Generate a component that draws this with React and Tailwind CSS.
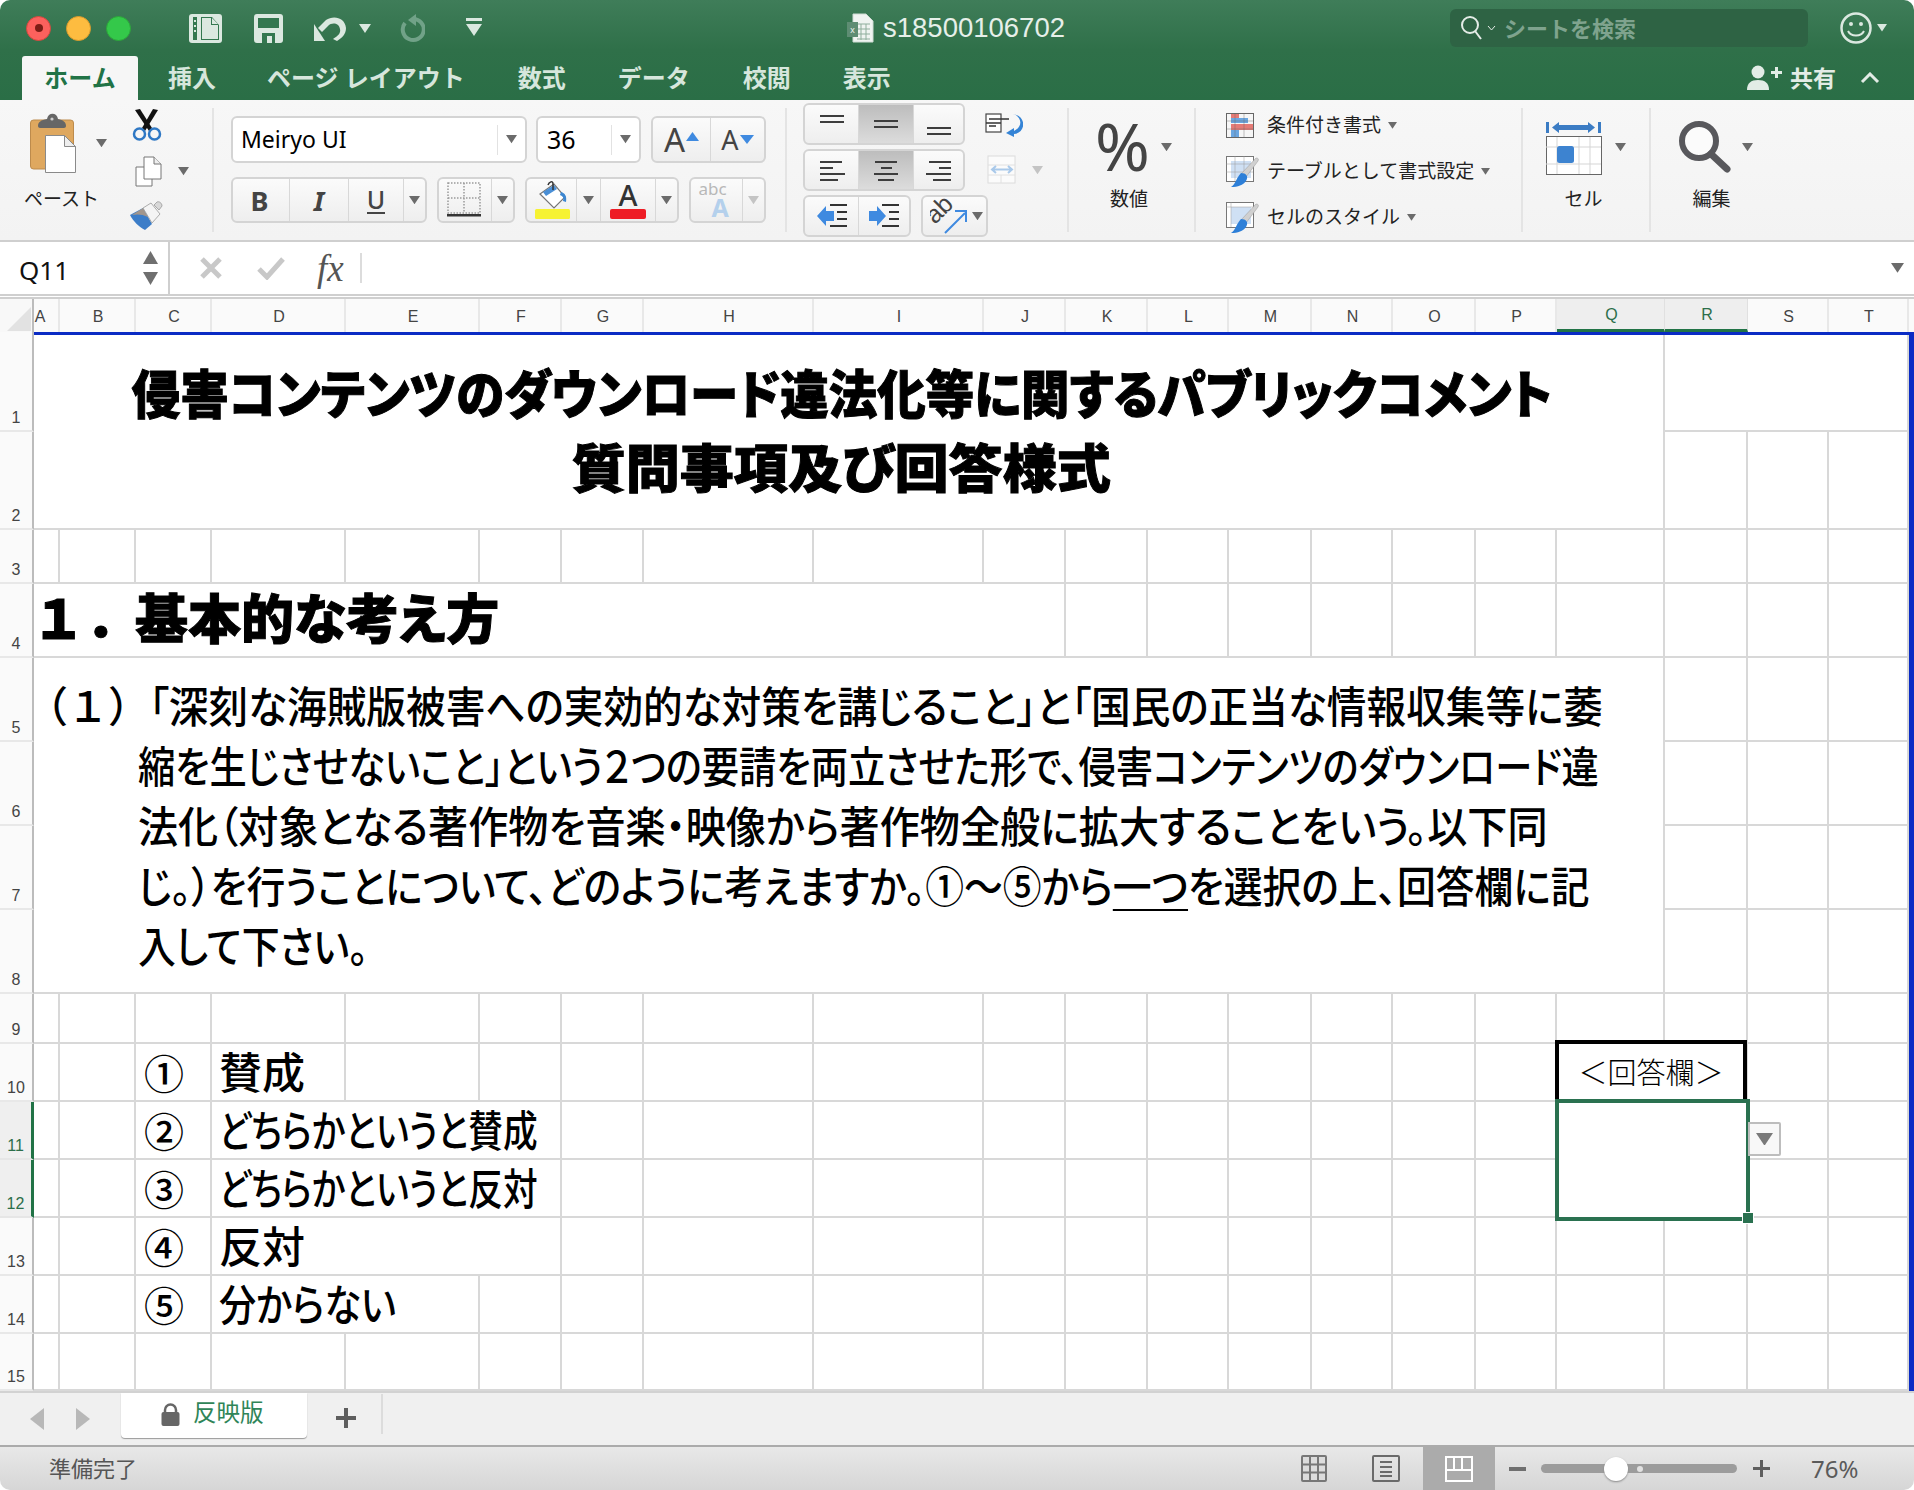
const uiFont = "[font-family:'Noto_Sans','Noto_Sans_CJK_JP',sans-serif]";
const sheetFont = "[font-family:'Noto_Sans_CJK_JP',sans-serif] [font-feature-settings:'palt'] text-black";
const labelFont = "[font-family:'Liberation_Sans',sans-serif]";

const colLetters = ["A", "B", "C", "D", "E", "F", "G", "H", "I", "J", "K", "L", "M", "N", "O", "P", "Q", "R", "S", "T"];

function Drop({ className = "", color = "#6b6b6b", w = 11 }) {
  return (
    <svg width={w} height={w * 0.75} viewBox="0 0 12 9" className={`shrink-0 ${className}`}>
      <path d="M0 0h12L6 9z" fill={color} />
    </svg>
  );
}

function Seg({ className = "", children }) {
  return (
    <div className={`flex overflow-hidden rounded-[6px] border-2 border-[#d4d4d4] bg-gradient-to-b from-[#fbfbfb] to-[#eeeeee] ${className}`}>
      {children}
    </div>
  );
}

function Cell({ w, active, last, children }) {
  return (
    <div
      className={`flex h-full items-center justify-center ${w} ${active ? "bg-gradient-to-b from-[#bdbdbd] to-[#dcdcdc]" : ""} ${last ? "" : "border-r border-[#d8d8d8]"}`}
    >
      {children}
    </div>
  );
}

function Lines({ rows, dy = 0 }) {
  return (
    <svg width="26" height="26" viewBox="0 0 26 26">
      {rows.map(([x, w, y]) => (
        <rect key={y} x={x} y={y + dy} width={w} height="2" fill="#3d3d3d" />
      ))}
    </svg>
  );
}

function Vsep() {
  return <div className="my-[8px] w-[2px] shrink-0 bg-[#e4e4e4]" />;
}

function Paste() {
  return (
    <svg width="47" height="60" viewBox="0 0 47 60">
      <rect x="0.5" y="7" width="43" height="49" rx="3" fill="#dfa85f" stroke="#bd8b4c" />
      <path d="M8 13c0-4 3-6 9-7 1-7 10-7 11 0 5 1 8 3 8 7 0 1-1 2-2 2H10c-1 0-2-1-2-2z" fill="#666" />
      <circle cx="22" cy="6" r="1.6" fill="#cfcfcf" />
      <path d="M15.5 22.500h19l11 11V59.500h-30z" fill="#fff" stroke="#8a8a8a" />
      <path d="M34.500 22.500v11h11z" fill="#eeeeee" stroke="#8a8a8a" />
    </svg>
  );
}

function Scissors() {
  return (
    <svg width="30" height="34" viewBox="0 0 30 34">
      <path d="M3 2l5-1 12 19-3 3z" fill="#111" />
      <path d="M26 2l-5-1-11 19 3 3z" fill="#111" />
      <circle cx="7.500" cy="26" r="5.500" fill="none" stroke="#2f78c4" strokeWidth="2.500" />
      <circle cx="22.500" cy="26" r="5.500" fill="none" stroke="#2f78c4" strokeWidth="2.500" />
    </svg>
  );
}

function Copy() {
  return (
    <svg width="27" height="31" viewBox="0 0 27 31">
      <path d="M1 11h16v19H1z" fill="#fff" stroke="#777" />
      <path d="M9 1h10l7 7v15H9z" fill="#fff" stroke="#777" />
      <path d="M19 1v7h7" fill="#eee" stroke="#777" />
    </svg>
  );
}

function Brush() {
  return (
    <svg width="34" height="30" viewBox="0 0 34 30">
      <path d="M0 14l13-7 9 16-7 6C9 26 3 20 0 14z" fill="#3c7dc8" />
      <path d="M2 14l11-7 5 9c-6-3-11-3-16-2z" fill="#a2968c" />
      <path d="M13 7l8-5 9 11-8 9z" fill="#f4f4f4" stroke="#999" strokeWidth="0.800" />
      <path d="M24 4l3-3c2-1 5 1 5 4l-3 4z" fill="#d8d8d8" stroke="#999" strokeWidth="0.800" />
    </svg>
  );
}

function BorderIcon() {
  return (
    <svg width="36" height="36" viewBox="0 0 36 36">
      <rect x="1" y="1" width="32" height="30" fill="none" stroke="#9a9a9a" strokeWidth="1.500" strokeDasharray="1.500 1.500" />
      <path d="M17 1v30M1 16h32" stroke="#9a9a9a" strokeWidth="1.500" strokeDasharray="1.500 1.500" />
      <rect x="0" y="32" width="34" height="2.500" fill="#333" />
    </svg>
  );
}

function FillIcon() {
  return (
    <svg width="36" height="40" viewBox="0 0 36 40">
      <path d="M6 14L20 4l11 13-11 11z" fill="#fff" stroke="#777" strokeWidth="1.200" />
      <path d="M9 12l11-7 3 4-11 7z" fill="#4a8fd6" />
      <path d="M14 5c1-3 5-5 5-1v6" fill="none" stroke="#333" strokeWidth="1.500" />
      <path d="M27 12c4 1 6 4 5 10l-3-1c1-3 0-5-3-6z" fill="#3c86d0" />
      <rect x="1" y="29" width="35" height="10" rx="1.500" fill="#f6f232" />
    </svg>
  );
}

function WrapIcon() {
  return (
    <svg width="38" height="24" viewBox="0 0 38 24">
      <rect x="1" y="1" width="15" height="18" fill="#fff" stroke="#444" strokeWidth="1.200" />
      <path d="M1 10h15M4 6h20M4 13h7" stroke="#333" strokeWidth="1.500" />
      <path d="M28 1c8 2 11 12 1 17v-3l-8 5 8 4v-3c12-1 13-18-1-20z" fill="#3584d6" />
    </svg>
  );
}

function MergeIcon() {
  return (
    <svg width="30" height="30" viewBox="0 0 30 30">
      <rect x="1" y="1" width="27" height="27" fill="#fbfbfb" stroke="#dcdcdc" />
      <path d="M1 10h27M1 20h27M14 20v8" stroke="#e0e0e0" />
      <path d="M5 14.500h20M9 11l-4 3.500L9 18M21 11l4 3.500-4 3.500" stroke="#a9c9ea" strokeWidth="2" fill="none" />
    </svg>
  );
}

function Indent({ right }) {
  return (
    <svg width="32" height="24" viewBox="0 0 32 24">
      {right ? <path d="M1 7h8V2l9 10-9 10v-5H1z" fill="#3f8ae0" /> : <path d="M18 7h-8V2L1 12l9 10v-5h8z" fill="#3f8ae0" />}
      <path d="M14 1h17M21 8h10M21 15h10M14 22h17" stroke="#333" strokeWidth="2" />
    </svg>
  );
}

function OrientIcon() {
  return (
    <svg width="40" height="38" viewBox="0 0 40 38">
      <text x="0" y="0" transform="translate(5 28) rotate(-45)" fontSize="25" fill="#444" fontFamily="Liberation Sans">ab</text>
      <path d="M15 36L35 16M25 14h11v11" fill="none" stroke="#3f8ae0" strokeWidth="2" />
    </svg>
  );
}

function CondIcon() {
  return (
    <svg width="28" height="25" viewBox="0 0 28 25">
      <rect x="5" y="1" width="8" height="4" fill="#e57b76" />
      <rect x="5" y="5" width="17" height="5" fill="#6ba6e0" />
      <rect x="5" y="11" width="23" height="6" fill="#e57b76" />
      <rect x="5" y="17" width="8" height="7" fill="#6ba6e0" />
      <rect x="0.500" y="0.500" width="27" height="24" fill="none" stroke="#666" />
      <path d="M9 0v25M18 0v25M0 8h27M0 16h27" stroke="#666" strokeWidth="0.400" />
    </svg>
  );
}

function StyleIcon({ grid }) {
  return (
    <svg width="33" height="32" viewBox="0 0 33 32">
      <rect x="0.500" y="0.500" width="27" height="25" fill="#fff" stroke="#777" />
      <rect x="5" y="5" width="20" height="17" fill="#cfe0f4" />
      {grid ? <path d="M9 0v25M18 0v25M0 8h27M0 16h27" stroke="#9a9a9a" strokeWidth="0.500" /> : <path d="M5 0v25M0 5h27" stroke="#999" strokeWidth="0.500" />}
      <path d="M30 2c2 0 3 1 2 3L20 21l-5-3z" fill="#d0d0d0" stroke="#999" strokeWidth="0.500" />
      <path d="M15 17c5 0 8 3 5 8-3 4-8 6-15 6 5-3 5-9 10-14z" fill="#2d7fd8" />
    </svg>
  );
}

function CellsIcon() {
  return (
    <svg width="60" height="56" viewBox="0 0 60 56">
      <path d="M1 3h3v11H1zM53 3h3v11h-3z" fill="#3b7cc4" />
      <path d="M7 8.500l7-5.500v3h29V3l7 5.500-7 5.500v-3H14v3z" fill="#3b7cc4" />
      <rect x="1.500" y="17.500" width="55" height="38" fill="#fff" stroke="#666" />
      <path d="M12 18v37M45 18v37M1 28h55M1 45h55M34 18v37" stroke="#d5d5d5" />
      <rect x="12" y="27" width="17" height="17" rx="2.500" fill="#3d83d0" />
    </svg>
  );
}

function Magnifier() {
  return (
    <svg width="54" height="54" viewBox="0 0 54 54">
      <circle cx="21" cy="21" r="17" fill="#fbfbfb" stroke="#58585c" strokeWidth="6" />
      <path d="M33 34l16 15" stroke="#58585c" strokeWidth="7" strokeLinecap="round" />
    </svg>
  );
}

function QuickAccess() {
  const light = "#dbe8e0";
  return (
    <div className="ml-[58px] flex items-center">
      <svg width="33" height="29" viewBox="0 0 33 29">
        <path d="M3 0h27a3 3 0 013 3v23a3 3 0 01-3 3H3a3 3 0 01-3-3V3a3 3 0 013-3z" fill={light} />
        <path d="M8 3h-4v23h4zM12 3v23h18V11l-7-8z" fill="#33774f" />
        <path d="M13 4h9v7h7v14H13z" fill={light} />
        <path d="M5 6h2v2H5zM5 11h2v2H5zM5 16h2v2H5z" fill={light} />
        <path d="M23 4l6 6h-6z" fill={light} />
      </svg>
      <svg width="29" height="29" viewBox="0 0 29 29" className="ml-[32px]">
        <path d="M3 0h23a3 3 0 013 3v23a3 3 0 01-3 3H3a3 3 0 01-3-3V3a3 3 0 013-3z" fill={light} />
        <path d="M4 4h21v10H4zM8 19h13v10H8z" fill="#33774f" />
        <path d="M13 22h5v7h-5z" fill={light} />
      </svg>
      <svg width="32" height="26" viewBox="0 0 32 26" className="ml-[31px]">
        <path d="M0 9l11 17H0z" fill={light} />
        <path d="M4 13l8-8c7-5 19-3 20 8 0 6-4 10-9 13l-4-2c5-3 8-6 7-10-1-6-8-7-12-3l-6 6z" fill={light} />
      </svg>
      <Drop className="ml-[13px]" color={light} w={12} />
      <svg width="25" height="29" viewBox="0 0 25 29" className="ml-[29px]">
        <path d="M13 5a10.500 10.500 0 11-8 4" fill="none" stroke="#71a288" strokeWidth="4" />
        <path d="M12 0v12l8-6z" fill="#71a288" transform="rotate(180 14 6)" />
      </svg>
      <svg width="18" height="20" viewBox="0 0 18 20" className="ml-[40px]">
        <path d="M1 0h16v3H1zM1 6h16l-8 12z" fill={light} />
      </svg>
    </div>
  );
}

function ExcelDoc() {
  return (
    <svg width="27" height="30" viewBox="0 0 27 30">
      <path d="M6 1h13l7 7v21H6z" fill="#f0f4f1" stroke="#cfdcd4" />
      <path d="M10 11h13M10 16h13M10 21h13M10 26h13M14 11v16M19 11v16" stroke="#8fae9c" />
      <rect x="0" y="9" width="11" height="15" fill="#5e8d73" />
      <text x="5.500" y="20" fontSize="9" textAnchor="middle" fill="#eef4f0" fontFamily="Liberation Sans">x</text>
    </svg>
  );
}

function TitleBar() {
  return (
    <div className="flex h-[56px] items-center">
      <div className="ml-[26px] flex gap-[15px]">
        <div className="flex h-[25px] w-[25px] items-center justify-center rounded-full border border-[#d4483e] bg-[#fc615d]">
          <div className="h-[8px] w-[8px] rounded-full bg-[#7c1d16]" />
        </div>
        <div className="h-[25px] w-[25px] rounded-full border border-[#d99a2c] bg-[#fdbc40]" />
        <div className="h-[25px] w-[25px] rounded-full border border-[#2ca63a] bg-[#34c84a]" />
      </div>
      <QuickAccess />
      <div className="ml-[364px]">
        <ExcelDoc />
      </div>
      <span className={`ml-[9px] text-[27.500px] leading-none text-[#e6efe9] ${labelFont}`}>s18500106702</span>
      <div className="ml-[385px] flex h-[38px] w-[358px] items-center rounded-[6px] bg-[#2e6344] pl-[10px]">
        <svg width="24" height="26" viewBox="0 0 24 26">
          <circle cx="10" cy="10" r="8" fill="none" stroke="#e4ece7" strokeWidth="2" />
          <path d="M15 16l6 8" stroke="#e4ece7" strokeWidth="2" />
        </svg>
        <svg width="9" height="6" viewBox="0 0 9 6" className="ml-[3px]">
          <path d="M1 1l3.500 4L8 1" fill="none" stroke="#e4ece7" />
        </svg>
        <span className="ml-[8px] text-[22px] font-semibold leading-none text-[#7fa38e]">シートを検索</span>
      </div>
      <svg width="32" height="34" viewBox="0 0 32 34" className="ml-[32px]">
        <circle cx="16" cy="17" r="14.500" fill="none" stroke="#dbe8e0" strokeWidth="2.500" />
        <circle cx="11" cy="13" r="2" fill="#dbe8e0" />
        <circle cx="21" cy="13" r="2" fill="#dbe8e0" />
        <path d="M8 20c3 6 13 6 16 0" fill="none" stroke="#dbe8e0" strokeWidth="2" />
      </svg>
      <Drop className="ml-[5px]" color="#dbe8e0" w={10} />
    </div>
  );
}

function TabRow() {
  const tabs = [
    ["挿入", "ml-[30px]"],
    ["ページ レイアウト", "ml-[51px]"],
    ["数式", "ml-[53px]"],
    ["データ", "ml-[52px]"],
    ["校閲", "ml-[53px]"],
    ["表示", "ml-[52px]"],
  ];
  return (
    <div className="flex h-[44px] items-stretch">
      <div className="ml-[22px] flex w-[116px] items-center justify-center rounded-t-[3px] bg-[#f6f6f6] text-[24px] font-semibold text-[#217346]">
        ホーム
      </div>
      {tabs.map(([label, ml]) => (
        <div key={label} className={`flex items-center text-[24px] font-semibold text-[#d6e6dc] ${ml}`}>
          {label}
        </div>
      ))}
      <div className="ml-auto mr-[34px] flex items-center text-[#e2ece6]">
        <svg width="35" height="26" viewBox="0 0 35 26">
          <circle cx="11" cy="7" r="6.500" fill="#e2ece6" />
          <path d="M0 25c0-7 4-10 11-10s11 3 11 10z" fill="#e2ece6" />
          <path d="M24 6h4V2h3v4h4v3h-4v4h-3V9h-4z" fill="#e2ece6" />
        </svg>
        <span className="ml-[8px] text-[23px] font-semibold">共有</span>
        <svg width="20" height="12" viewBox="0 0 20 12" className="ml-[24px]">
          <path d="M2 10l8-8 8 8" fill="none" stroke="#e2ece6" strokeWidth="3" />
        </svg>
      </div>
    </div>
  );
}

function Clipboard() {
  return (
    <div className="flex w-[212px] shrink-0">
      <div className="ml-[24px] flex w-[90px] flex-col pt-[13px]">
        <div className="ml-[6px] flex items-center">
          <Paste />
          <Drop className="ml-[19px]" />
        </div>
        <span className="mt-[12px] text-[19px] leading-[28px] text-[#222]">ペースト</span>
      </div>
      <div className="ml-[18px] flex flex-col pt-[8px]">
        <Scissors />
        <div className="ml-[3px] mt-[14px] flex items-center">
          <Copy />
          <Drop className="ml-[16px]" />
        </div>
        <div className="-ml-[2px] mt-[14px]">
          <Brush />
        </div>
      </div>
    </div>
  );
}

function FontGroup() {
  return (
    <div className="flex w-[571px] shrink-0 flex-col pl-[17px] pt-[16px]">
      <div className="flex h-[47px]">
        <div className="flex w-[296px] items-center rounded-[6px] border-2 border-[#d4d4d4] bg-white">
          <span className="ml-[8px] flex-1 text-[23px] text-black">Meiryo UI</span>
          <div className="flex h-[30px] w-[28px] items-center justify-center border-l border-[#e2e2e2]">
            <Drop />
          </div>
        </div>
        <div className="ml-[9px] flex w-[105px] items-center rounded-[6px] border-2 border-[#d4d4d4] bg-white">
          <span className="ml-[9px] flex-1 text-[25px] text-black">36</span>
          <div className="flex h-[30px] w-[28px] items-center justify-center border-l border-[#e2e2e2]">
            <Drop />
          </div>
        </div>
        <Seg className="ml-[10px] w-[115px]">
          <Cell w="w-[58px]">
            <span className="text-[33px] leading-none text-[#444]">A</span>
            <svg width="13" height="9" viewBox="0 0 13 9" className="mb-[6px] ml-[1px]">
              <path d="M6.500 0L13 9H0z" fill="#3f8ae0" />
            </svg>
          </Cell>
          <Cell w="flex-1" last>
            <span className="text-[27px] leading-none text-[#444]">A</span>
            <svg width="14" height="9" viewBox="0 0 14 9" className="ml-[1px]">
              <path d="M0 0h14L7 9z" fill="#3f8ae0" />
            </svg>
          </Cell>
        </Seg>
      </div>
      <div className="mt-[14px] flex h-[46px]">
        <Seg className="w-[196px]">
          <Cell w="w-[57px]">
            <span className="mr-[3px] text-[27px] font-bold leading-none text-[#444]">B</span>
          </Cell>
          <Cell w="w-[59px]">
            <span className="text-[27px] font-bold italic leading-none text-[#444]">I</span>
          </Cell>
          <Cell w="w-[55px]">
            <span className="border-b-2 border-[#444] text-[25px] font-medium leading-[26px] text-[#444]">U</span>
          </Cell>
          <Cell w="flex-1" last>
            <Drop />
          </Cell>
        </Seg>
        <Seg className="ml-[10px] w-[78px]">
          <Cell w="w-[53px]">
            <BorderIcon />
          </Cell>
          <Cell w="flex-1" last>
            <Drop />
          </Cell>
        </Seg>
        <Seg className="ml-[10px] w-[154px]">
          <Cell w="w-[50px]">
            <FillIcon />
          </Cell>
          <Cell w="w-[24px]">
            <Drop />
          </Cell>
          <Cell w="w-[55px]">
            <div className="flex flex-col items-center">
              <span className="text-[29px] font-medium leading-[28px] text-[#333]">A</span>
              <div className="h-[10px] w-[36px] rounded-[2px] bg-[#ee1c25]" />
            </div>
          </Cell>
          <Cell w="flex-1" last>
            <Drop />
          </Cell>
        </Seg>
        <Seg className="ml-[10px] w-[77px]">
          <Cell w="w-[52px]">
            <div className="flex w-[36px] flex-col leading-none">
              <span className="text-[17px] leading-[14px] text-[#b8b8b8]">abc</span>
              <span className="ml-[13px] text-[25px] font-bold leading-[22px] text-[#b4d0ec]">A</span>
            </div>
          </Cell>
          <Cell w="flex-1" last>
            <Drop color="#c4c4c4" />
          </Cell>
        </Seg>
      </div>
    </div>
  );
}

function AlignGroup() {
  return (
    <div className="flex w-[280px] shrink-0 flex-col gap-[4px] pl-[16px] pt-[3px]">
      <div className="flex h-[42px] items-center">
        <Seg className="h-[42px] w-[162px]">
          <Cell w="w-[54px]">
            <Lines rows={[[1, 24, 6], [1, 24, 12]]} dy={-2} />
          </Cell>
          <Cell w="w-[55px]" active>
            <Lines rows={[[1, 24, 9], [1, 24, 15]]} />
          </Cell>
          <Cell w="flex-1" last>
            <Lines rows={[[1, 24, 16], [1, 24, 22]]} />
          </Cell>
        </Seg>
        <div className="ml-[20px] mt-[2px]">
          <WrapIcon />
        </div>
      </div>
      <div className="flex h-[42px] items-center">
        <Seg className="h-[42px] w-[162px]">
          <Cell w="w-[54px]">
            <Lines rows={[[1, 22, 4], [1, 13, 10], [1, 25, 16], [1, 18, 22]]} />
          </Cell>
          <Cell w="w-[55px]" active>
            <Lines rows={[[2, 22, 4], [8, 11, 10], [1, 24, 16], [5, 16, 22]]} />
          </Cell>
          <Cell w="flex-1" last>
            <Lines rows={[[3, 22, 4], [13, 12, 10], [0, 25, 16], [7, 18, 22]]} />
          </Cell>
        </Seg>
        <div className="ml-[22px]">
          <MergeIcon />
        </div>
        <Drop className="ml-[15px]" color="#c4c4c4" />
      </div>
      <div className="flex h-[42px]">
        <Seg className="w-[108px]">
          <Cell w="w-[54px]">
            <Indent />
          </Cell>
          <Cell w="flex-1" last>
            <Indent right />
          </Cell>
        </Seg>
        <Seg className="ml-[10px] w-[67px]">
          <div className="flex h-full w-full items-center pl-[7px]">
            <OrientIcon />
            <Drop className="ml-[2px]" />
          </div>
        </Seg>
      </div>
    </div>
  );
}

function BigGroup({ width, icon, label, dropMl, pl }) {
  return (
    <div className={`flex shrink-0 flex-col ${width} ${pl}`}>
      <div className="flex h-[84px] items-center pt-[10px]">
        {icon}
        <Drop className={dropMl} />
      </div>
      <span className="mt-[1px] text-center text-[19px] leading-[28px] text-[#222]">{label}</span>
    </div>
  );
}

function StylesGroup() {
  const rows = [
    ["条件付き書式", <CondIcon key="a" />],
    ["テーブルとして書式設定", <StyleIcon key="b" grid />],
    ["セルのスタイル", <StyleIcon key="c" />],
  ];
  return (
    <div className="flex w-[325px] shrink-0 flex-col gap-[15px] pl-[30px] pt-[10px]">
      {rows.map(([label, icon]) => (
        <div key={label} className="flex h-[31px] items-center">
          <div className="flex w-[41px] items-center">{icon}</div>
          <span className="text-[19px] leading-none text-[#222]">{label}</span>
          <Drop className="ml-[7px]" w={9} />
        </div>
      ))}
    </div>
  );
}

function Ribbon() {
  return (
    <div className="flex h-[142px] border-b-2 border-[#cfcfcf] bg-gradient-to-b from-[#f7f7f7] to-[#f3f3f3]">
      <Clipboard />
      <Vsep />
      <FontGroup />
      <Vsep />
      <AlignGroup />
      <Vsep />
      <BigGroup
        width="w-[125px]"
        pl="pl-[26px]"
        dropMl="ml-[11px]"
        icon={<span className="-mt-[4px] text-[66px] leading-none text-[#444]">%</span>}
        label={<span className="-ml-[31px]">数値</span>}
      />
      <Vsep />
      <StylesGroup />
      <Vsep />
      <BigGroup
        width="w-[126px]"
        pl="pl-[22px]"
        dropMl="ml-[10px]"
        icon={<CellsIcon />}
        label={<span className="-ml-[27px]">セル</span>}
      />
      <Vsep />
      <BigGroup
        width="w-[120px]"
        pl="pl-[27px]"
        dropMl="ml-[10px]"
        icon={<Magnifier />}
        label={<span className="-ml-[26px]">編集</span>}
      />
    </div>
  );
}

function FormulaBar() {
  return (
    <>
      <div className="flex h-[52px] bg-white">
        <div className="flex w-[170px] shrink-0 items-center border-r-2 border-[#cfcfcf] pl-[19px] pr-[10px]">
          <span className="flex-1 pt-[4px] text-[26px] text-[#111]">Q11</span>
          <div className="flex flex-col gap-[8px]">
            <svg width="15" height="13" viewBox="0 0 15 13">
              <path d="M7.500 0L15 13H0z" fill="#6f6f6f" />
            </svg>
            <svg width="15" height="13" viewBox="0 0 15 13">
              <path d="M0 0h15L7.500 13z" fill="#6f6f6f" />
            </svg>
          </div>
        </div>
        <div className="ml-[29px] flex items-center">
          <svg width="24" height="24" viewBox="0 0 24 24">
            <path d="M3 3l18 18M21 3L3 21" stroke="#c8c8c8" strokeWidth="5" />
          </svg>
          <svg width="28" height="24" viewBox="0 0 28 24" className="ml-[34px]">
            <path d="M2 13l8 8L26 3" fill="none" stroke="#c8c8c8" strokeWidth="5" />
          </svg>
          <span className="ml-[32px] [font-family:'Liberation_Serif',serif] text-[37px] italic leading-none text-[#555]">fx</span>
          <div className="ml-[16px] h-[30px] w-[2px] bg-[#dcdcdc]" />
        </div>
        <div className="ml-auto mr-[10px] flex items-center">
          <Drop w={13} />
        </div>
      </div>
      <div className="h-[5px] border-y-2 border-[#cfcfcf] bg-white" />
    </>
  );
}

function RowHead({ n, on }) {
  return (
    <div
      className={`flex items-end justify-center border-b-2 pb-[2px] text-[16px] leading-[20px] ${labelFont} ${
        on
          ? "border-r-[3px] border-b-[#e6e6e6] border-r-[#217346] bg-[#efefef] text-[#2c6e4a]"
          : "border-r-2 border-b-[#e8e8e8] border-r-[#bcbcbc] bg-[#fafafa] text-[#444]"
      }`}
    >
      {n}
    </div>
  );
}

const line = "border-b-2 border-r-2 border-[#d8d8d8]";

function Blank({ span = "" }) {
  return <div className={`${line} ${span}`} />;
}

function Blanks({ n }) {
  return Array.from({ length: n }, (_, i) => <Blank key={i} />);
}

function Option({ num, text, span = "", squeeze = "" }) {
  return (
    <>
      <div className={`flex items-center pl-[8px] text-[40px] font-medium leading-none ${line} ${sheetFont} [font-feature-settings:normal]`}>{num}</div>
      <div className={`flex items-center whitespace-nowrap pb-[3px] pl-[7px] text-[43px] font-medium leading-none ${line} ${sheetFont} ${span}`}>
        <span className={`inline-block origin-left ${squeeze}`}>{text}</span>
      </div>
    </>
  );
}

function BodyLine({ squeeze, children }) {
  return (
    <div className="pl-[104px]">
      <span className={`inline-block origin-left ${squeeze}`}>{children}</span>
    </div>
  );
}

function Sheet() {
  return (
    <div className="grid h-[1092px] grid-cols-[34px_26px_76px_76px_134px_134px_82px_82px_170px_170px_82px_82px_81px_83px_81px_83px_81px_108px_83px_81px_80px_5px] grid-rows-[33px_3px_97px_98px_54px_74px_84px_84px_84px_84px_50px_58px_58px_58px_58px_58px_57px] bg-white">
      <div className="relative border-r-2 border-[#bcbcbc] bg-[#f8f8f8]">
        <svg width="24" height="24" viewBox="0 0 24 24" className="absolute bottom-[1px] left-[7px]">
          <path d="M0 24L24 0v24z" fill="#e2e2e2" />
        </svg>
      </div>
      {colLetters.map((c) => (
        <div
          key={c}
          className={`flex items-center justify-center pt-[2px] text-[16px] ${labelFont} ${c === "A" ? "pr-[12px]" : "pl-[2px]"} ${
            c === "Q" || c === "R"
              ? "border-b-[3px] border-r border-b-[#217346] border-r-[#e0e0e0] bg-[#eeeeee] text-[#2c6e4a]"
              : "border-r-2 border-[#e8e8e8] bg-[#fafafa] text-[#444]"
          }`}
        >
          {c}
        </div>
      ))}
      <div className="bg-[#fafafa]" />

      <div className="border-r-2 border-[#bcbcbc] bg-[#fafafa]" />
      <div className="col-span-21 bg-[#0a2bc4]" />

      {/* rows 1-2 */}
      <RowHead n={1} />
      <div className={`col-span-17 row-span-2 flex flex-col items-center justify-center pb-[6px] pr-[14px] text-[52px] font-black leading-[74px] [-webkit-text-stroke:1px_black] ${line} ${sheetFont}`}>
        <div className="inline-block scale-x-[.932] whitespace-nowrap">侵害コンテンツのダウンロード違法化等に関するパブリックコメント</div>
        <div className="inline-block scale-x-[1.04] whitespace-nowrap">質問事項及び回答様式</div>
      </div>
      <Blank span="col-span-3" />
      <div className="row-span-15 bg-[#0a2bc4]" />
      <RowHead n={2} />
      <Blanks n={3} />

      {/* row 3 */}
      <RowHead n={3} />
      <Blanks n={20} />

      {/* row 4 */}
      <RowHead n={4} />
      <div className={`col-span-10 flex items-center whitespace-nowrap pb-[7px] text-[53px] font-black leading-none [-webkit-text-stroke:1px_black] ${line} ${sheetFont}`}>
        <span className="-ml-[2px] w-[103px] [font-feature-settings:normal]">１．</span>
        <span>基本的な考え方</span>
      </div>
      <Blanks n={10} />

      {/* rows 5-8 */}
      <RowHead n={5} />
      <div className={`col-span-17 row-span-4 flex flex-col justify-center whitespace-nowrap pb-[3px] text-[43px] font-medium leading-[60px] ${line} ${sheetFont}`}>
        <div className="-ml-[8px] flex">
          <span className="w-[123px] text-[42px] tracking-[-1px] [font-feature-settings:normal]">（１）</span>
          <span className="inline-block origin-left scale-x-[.922]">「深刻な海賊版被害への実効的な対策を講じること」と「国民の正当な情報収集等に萎</span>
        </div>
        <BodyLine squeeze="scale-x-[.866]">縮を生じさせないこと」という２つの要請を両立させた形で、侵害コンテンツのダウンロード違</BodyLine>
        <BodyLine squeeze="scale-x-[.933]">法化（対象となる著作物を音楽・映像から著作物全般に拡大することをいう。以下同</BodyLine>
        <BodyLine squeeze="scale-x-[.902]">
          じ。）を行うことについて、どのように考えますか。①～⑤から
          <span className="underline decoration-[2px] underline-offset-[6px]">一つ</span>を選択の上、回答欄に記
        </BodyLine>
        <BodyLine squeeze="scale-x-[.882]">入して下さい。</BodyLine>
      </div>
      <Blanks n={3} />
      <RowHead n={6} />
      <Blanks n={3} />
      <RowHead n={7} />
      <Blanks n={3} />
      <RowHead n={8} />
      <Blanks n={3} />

      {/* row 9 */}
      <RowHead n={9} />
      <Blanks n={20} />

      {/* row 10 */}
      <RowHead n={10} />
      <Blanks n={2} />
      <Option num="①" text="賛成" />
      <Blanks n={12} />
      <div className={`relative col-span-2 ${line}`}>
        <div className={`absolute -left-[2px] -right-[1px] -top-[4px] bottom-[-1px] flex items-center justify-center border-[4px] border-b-0 border-black pb-[3px] text-[29px] font-extralight leading-none ${sheetFont}`}>
          <span className="[font-feature-settings:normal]">＜回答欄＞</span>
        </div>
      </div>
      <Blanks n={2} />

      {/* rows 11-12 */}
      <RowHead n={11} on />
      <Blanks n={2} />
      <Option num="②" text="どちらかというと賛成" span="col-span-3" squeeze="scale-x-[.807]" />
      <Blanks n={10} />
      <div className="relative col-span-2 row-span-2">
        <div className="absolute -left-[2px] -top-[3px] bottom-[-3px] -right-[2px] border-[4px] border-[#2a7150]" />
        <div className="absolute bottom-[-6px] right-[-6px] h-[12px] w-[12px] border border-white bg-[#2a7150]" />
        <div className="absolute left-[191px] top-[20px] flex h-[34px] w-[33px] items-center justify-center rounded-r-[2px] border-2 border-[#bdbdbd] bg-[#f8f8f8]">
          <Drop w={17} color="#7a7a7a" />
        </div>
      </div>
      <Blanks n={2} />
      <RowHead n={12} on />
      <Blanks n={2} />
      <Option num="③" text="どちらかというと反対" span="col-span-3" squeeze="scale-x-[.807]" />
      <Blanks n={10} />
      <Blanks n={2} />

      {/* rows 13-15 */}
      <RowHead n={13} />
      <Blanks n={2} />
      <Option num="④" text="反対" span="col-span-3" />
      <Blanks n={14} />
      <RowHead n={14} />
      <Blanks n={2} />
      <Option num="⑤" text="分からない" span="col-span-2" squeeze="scale-x-[.865]" />
      <Blanks n={15} />
      <RowHead n={15} />
      <Blanks n={20} />
    </div>
  );
}

function SheetTabs() {
  return (
    <div className="flex h-[54px] items-start border-t-2 border-[#d2d2d2] bg-[#f0f0f0]">
      <div className="ml-[30px] mt-[15px] flex gap-[32px]">
        <svg width="14" height="22" viewBox="0 0 14 22">
          <path d="M14 0v22L0 11z" fill="#b8b8b8" />
        </svg>
        <svg width="14" height="22" viewBox="0 0 14 22">
          <path d="M0 0v22l14-11z" fill="#b8b8b8" />
        </svg>
      </div>
      <div className="ml-[31px] flex h-[45px] w-[186px] items-center rounded-b-[4px] bg-white pb-[2px] pl-[40px] shadow-[0_1px_1px_#9a9a9a]">
        <svg width="19" height="23" viewBox="0 0 19 23">
          <path d="M4 10V7a5.500 5.500 0 0111 0v3" fill="none" stroke="#666" strokeWidth="2.500" />
          <rect x="0.500" y="9" width="18" height="14" rx="2" fill="#666" />
        </svg>
        <span className="ml-[13px] pb-[3px] text-[23.500px] leading-none text-[#2f8558]">反映版</span>
      </div>
      <svg width="20" height="20" viewBox="0 0 20 20" className="ml-[29px] mt-[15px]">
        <path d="M8 0h4v8h8v4h-8v8H8v-8H0V8h8z" fill="#5e5e5e" />
      </svg>
      <div className="ml-[25px] mt-[1px] h-[40px] w-[2px] bg-[#dcdcdc]" />
    </div>
  );
}

function StatusBar() {
  return (
    <div className="flex h-[45px] items-stretch rounded-b-[10px] border-t-2 border-[#ababab] bg-gradient-to-b from-[#e8e8e8] to-[#d6d6d6]">
      <span className="ml-[49px] flex items-center text-[22px] text-[#555]">準備完了</span>
      <div className="ml-auto flex items-center">
        <svg width="26" height="27" viewBox="0 0 26 27">
          <rect x="1" y="1" width="24" height="25" rx="1" fill="#dcdcdc" stroke="#777" strokeWidth="2" />
          <path d="M9 1v25M17 1v25M1 9.500h24M1 17.500h24" stroke="#777" strokeWidth="2" />
        </svg>
        <svg width="28" height="27" viewBox="0 0 28 27" className="ml-[45px]">
          <rect x="1" y="1" width="26" height="25" rx="1" fill="none" stroke="#6a6a6a" strokeWidth="2" />
          <path d="M8 7h12M8 12h12M8 17h12M8 21h12" stroke="#6a6a6a" strokeWidth="2" />
        </svg>
        <div className="ml-[23px] flex h-full w-[72px] items-center justify-center bg-[#ababab]">
          <svg width="28" height="26" viewBox="0 0 28 26">
            <rect x="1" y="1" width="26" height="24" fill="none" stroke="#fff" strokeWidth="2" />
            <path d="M9 1v13M17 1v13M1 14h26" stroke="#fff" strokeWidth="2" />
          </svg>
        </div>
        <div className="ml-[14px] h-[4px] w-[17px] bg-[#6f6f6f]" />
        <div className="ml-[15px] flex h-[9px] w-[196px] items-center rounded-full bg-[#9c9c9c]">
          <div className="ml-[63px] h-[24px] w-[24px] rounded-full bg-white shadow-[0_1px_2px_#888]" />
          <div className="ml-[9px] h-[6px] w-[6px] rounded-full bg-[#e2e2e2]" />
        </div>
        <svg width="17" height="17" viewBox="0 0 17 17" className="ml-[16px]">
          <path d="M7 0h3v7h7v3h-7v7H7v-7H0V7h7z" fill="#5e5e5e" />
        </svg>
        <span className="ml-[41px] mr-[54px] w-[49px] text-[24px] leading-none text-[#5a5a5a]">76%</span>
      </div>
    </div>
  );
}

export default function App() {
  return (
    <div className={`flex h-[1490px] w-[1914px] flex-col overflow-hidden bg-white ${uiFont}`}>
      <div className="h-[100px] overflow-hidden rounded-t-[10px] bg-gradient-to-b from-[#3f7d59] via-[#2f7049] to-[#2a6e46]">
        <TitleBar />
        <TabRow />
      </div>
      <Ribbon />
      <FormulaBar />
      <Sheet />
      <SheetTabs />
      <StatusBar />
    </div>
  );
}
